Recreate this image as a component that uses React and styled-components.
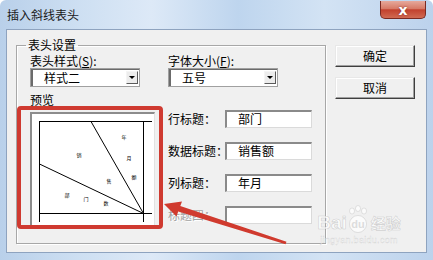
import React from 'react';
import styled, { createGlobalStyle } from 'styled-components';

const GlobalStyle = createGlobalStyle`
  html, body {
    margin: 0;
    padding: 0;
  }
  body {
    width: 433px;
    height: 260px;
    overflow: hidden;
    font-family: "Noto Sans CJK SC", "Liberation Sans", sans-serif;
    font-size: 12px;
    color: #000;
  }
`;

const Window = styled.div`
  position: relative;
  width: 433px;
  height: 260px;
  box-sizing: border-box;
  padding: 0 6px 7px 6px;
  display: flex;
  flex-direction: column;
  background: linear-gradient(
    to right,
    #b9d0ea 0%,
    #cddff2 18%,
    #dde9f7 35%,
    #bed5ee 55%,
    #d3e3f4 75%,
    #bcd2ec 100%
  );
  border-radius: 6px 6px 0 0;
  overflow: hidden;
`;

const TitleBar = styled.div`
  height: 29px;
  display: flex;
  align-items: flex-start;
`;

const Title = styled.div`
  margin: 8px 0 0 1px;
  line-height: 14px;
  font-size: 12px;
  color: #1a1a1a;
`;

const CloseButton = styled.div`
  margin: 1px 1px 0 auto;
  width: 46px;
  height: 18px;
  box-sizing: border-box;
  border: 1px solid #7a2a22;
  border-top: none;
  border-radius: 0 0 5px 5px;
  background: linear-gradient(#e6a99c 0%, #d77a66 45%, #c2412e 52%, #d06a52 100%);
  display: flex;
  align-items: center;
  justify-content: center;
  color: #fff;
  font-family: "DejaVu Sans", sans-serif;
  font-weight: bold;
  font-size: 14px;
  line-height: 14px;
  text-shadow: 0 0 2px #7a2a22;
`;

const Body = styled.div`
  flex: 1;
  border: 1px solid #8ea3bf;
  background: #f0f0f0;
  display: flex;
  align-items: flex-start;
  padding: 8px 0 0 9px;
`;

const GroupBox = styled.fieldset`
  margin: 0;
  padding: 0;
  width: 310px;
  box-sizing: border-box;
  border: 1px solid #a7a7a7;
  box-shadow: 1px 1px 0 #fff, inset 1px 1px 0 #fff;
`;

const Legend = styled.legend`
  margin-left: 9px;
  padding: 0 2px;
  line-height: 14px;
  font-size: 12px;
`;

const GroupContent = styled.div`
  padding: 2px 12px 15px 13px;
`;

const TopGrid = styled.div`
  display: grid;
  grid-template-columns: 125px 1fr;
  column-gap: 13px;
`;

const Label = styled.div`
  line-height: 14px;
  height: 14px;
  white-space: nowrap;
  color: ${(p) => (p.$disabled ? '#a3a3a3' : '#000')};
  text-shadow: ${(p) => (p.$disabled ? '1px 1px 0 #fff' : 'none')};
`;

const Combo = styled.div`
  width: 110px;
  height: 19px;
  box-sizing: border-box;
  border: 1px solid #a0a0a0;
  box-shadow: inset 2px 1px 0 #6b6b6b;
  background: #fff;
  display: flex;
  align-items: center;
  padding: 0 1px 0 13px;
  line-height: 14px;
`;

const ComboText = styled.span`
  flex: 1;
`;

const DropButton = styled.div`
  width: 12px;
  height: 13px;
  box-sizing: border-box;
  border: 1px solid;
  border-color: #f4f4f4 #5a5a5a #5a5a5a #f4f4f4;
  background: #ececec;
  display: flex;
  align-items: center;
  justify-content: center;

  &::after {
    content: '';
    border-left: 3px solid transparent;
    border-right: 3px solid transparent;
    border-top: 3px solid #000;
  }
`;

const PreviewLabel = styled(Label)`
  margin-top: 6px;
`;

const BottomRow = styled.div`
  display: flex;
  align-items: flex-start;
  gap: 13px;
`;

const PreviewFrame = styled.div`
  margin-top: 5px;
  width: 125px;
  height: 116px;
  box-sizing: border-box;
  border-style: solid;
  border-width: 2px 1px 1px 2px;
  border-color: #8c8c8c #e2e2e2 #e2e2e2 #8c8c8c;
  background: #fff;
`;

const FieldList = styled.div`
  margin-top: 3px;
  display: flex;
  flex-direction: column;
  gap: 14px;
`;

const FieldRow = styled.div`
  display: grid;
  grid-template-columns: 57px 87px;
  align-items: center;
  height: 18px;
`;

const TextBox = styled.div`
  height: 18px;
  box-sizing: border-box;
  border-style: solid;
  border-width: 2px 1px 1px 2px;
  border-color: #8a8a8a #dadada #dadada #8a8a8a;
  background: #fff;
  padding-left: 11px;
  line-height: 14px;
  white-space: nowrap;
`;

const ButtonColumn = styled.div`
  margin: 7px 0 0 9px;
  display: flex;
  flex-direction: column;
  gap: 10px;
`;

const Button = styled.div`
  width: 80px;
  height: 22px;
  box-sizing: border-box;
  border: 1px solid;
  border-color: #e8e8e8 #3f3f3f #3f3f3f #e8e8e8;
  box-shadow: inset -1px -1px 0 #a0a0a0, inset 1px 1px 0 #fff;
  background: #f0f0f0;
  display: flex;
  align-items: center;
  justify-content: center;
  line-height: 14px;
`;

const Highlight = styled.div`
  position: absolute;
  left: 17px;
  top: 106px;
  width: 146px;
  height: 123px;
  box-sizing: border-box;
  border: 4px solid #cf3a30;
  border-radius: 4px;
  pointer-events: none;
`;

const Overlay = styled.svg`
  position: absolute;
  left: 0;
  top: 0;
  pointer-events: none;
`;

const Watermark = styled.div`
  position: absolute;
  left: 313px;
  top: 205px;
  width: 92px;
  display: flex;
  flex-direction: column;
  align-items: center;
  color: rgba(255, 255, 255, 0.7);
  pointer-events: none;
`;

const MarkLine = styled.div`
  display: flex;
  align-items: flex-end;
  font-family: "Liberation Sans", sans-serif;
  font-weight: bold;
  font-size: 19px;
  line-height: 20px;
  -webkit-text-stroke: 0.6px rgba(160, 160, 160, 0.45);
`;

const MarkCn = styled.span`
  font-family: "Noto Sans CJK SC", sans-serif;
  font-size: 15px;
  margin-left: 2px;
`;

const MarkUrl = styled.div`
  margin-top: 3px;
  font-family: "Liberation Sans", sans-serif;
  font-size: 9px;
  line-height: 9px;
  letter-spacing: 0.3px;
  -webkit-text-stroke: 0.3px rgba(160, 160, 160, 0.45);
`;

const Paw = () => (
  <svg width="22" height="28" viewBox="0 0 22 28">
    <g fill="rgba(255,255,255,0.7)" stroke="rgba(160,160,160,0.45)" strokeWidth="0.6">
      <ellipse cx="5" cy="6" rx="2.5" ry="3" />
      <ellipse cx="11" cy="3.5" rx="2.5" ry="3" />
      <ellipse cx="17" cy="6" rx="2.5" ry="3" />
      <circle cx="11" cy="19" r="8.5" />
    </g>
    <text x="11" y="23" textAnchor="middle" fontSize="11" fontWeight="bold"
      fontFamily="Liberation Sans, sans-serif" fill="rgba(200,200,200,0.6)">du</text>
  </svg>
);

const marks = [
  [47, 43, '销'], [92, 25, '年'], [97, 46, '月'], [102, 65, '额'],
  [77, 69, '售'], [35, 83, '部'], [54, 87, '门'], [74, 91, '数'],
];

const PreviewDrawing = () => (
  <svg width="122" height="113" viewBox="0 0 122 113">
    <g stroke="#000" strokeWidth="1" fill="none" shapeRendering="crispEdges">
      <line x1="7" y1="7.5" x2="120" y2="7.5" />
      <line x1="7" y1="99.5" x2="120" y2="99.5" />
      <line x1="7.5" y1="7" x2="7.5" y2="108" />
      <line x1="111.5" y1="7" x2="111.5" y2="108" />
    </g>
    <g stroke="#000" strokeWidth="1">
      <line x1="111.5" y1="99.5" x2="59" y2="7.5" />
      <line x1="111.5" y1="99.5" x2="7.5" y2="50" />
    </g>
    {marks.map(([x, y, c]) => (
      <text key={c} x={x} y={y} fontSize="5" fill="#000" textAnchor="middle"
        fontFamily="Noto Sans CJK SC, sans-serif">{c}</text>
    ))}
  </svg>
);

const fields = [
  { label: '行标题：', value: '部门' },
  { label: '数据标题：', value: '销售额' },
  { label: '列标题：', value: '年月' },
  { label: '标题四：', value: '', disabled: true },
];

export default function App() {
  return (
    <>
      <GlobalStyle />
      <Window>
        <TitleBar>
          <Title>插入斜线表头</Title>
          <CloseButton>x</CloseButton>
        </TitleBar>
        <Body>
          <GroupBox>
            <Legend>表头设置</Legend>
            <GroupContent>
              <TopGrid>
                <Label>表头样式(<u>S</u>):</Label>
                <Label>字体大小(<u>F</u>):</Label>
                <Combo>
                  <ComboText>样式二</ComboText>
                  <DropButton />
                </Combo>
                <Combo>
                  <ComboText>五号</ComboText>
                  <DropButton />
                </Combo>
              </TopGrid>
              <PreviewLabel>预览</PreviewLabel>
              <BottomRow>
                <PreviewFrame>
                  <PreviewDrawing />
                </PreviewFrame>
                <FieldList>
                  {fields.map((f) => (
                    <FieldRow key={f.label}>
                      <Label $disabled={f.disabled}>{f.label}</Label>
                      <TextBox>{f.value}</TextBox>
                    </FieldRow>
                  ))}
                </FieldList>
              </BottomRow>
            </GroupContent>
          </GroupBox>
          <ButtonColumn>
            <Button>确定</Button>
            <Button>取消</Button>
          </ButtonColumn>
        </Body>
        <Watermark>
          <MarkLine>
            Bai
            <Paw />
            <MarkCn>经验</MarkCn>
          </MarkLine>
          <MarkUrl>jingyan.baidu.com</MarkUrl>
        </Watermark>
        <Highlight />
        <Overlay width="433" height="260" viewBox="0 0 433 260">
          <polygon
            fill="#d03a2e"
            points="164,204 182,201.5 180.3,206 286.5,241.8 285.5,244.2 178.2,211.6 176.5,216.5"
          />
        </Overlay>
      </Window>
    </>
  );
}
